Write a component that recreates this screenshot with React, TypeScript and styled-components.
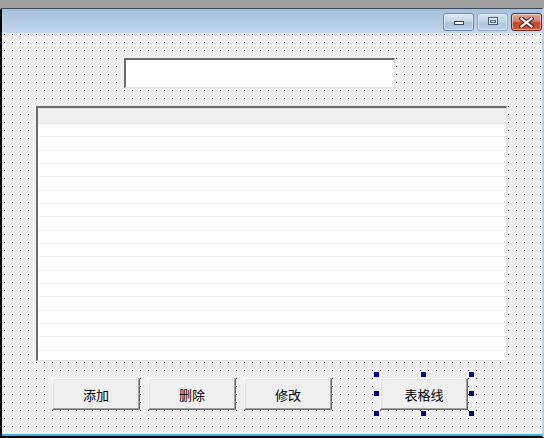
import React from 'react'
import styled, { createGlobalStyle } from 'styled-components'

const GlobalStyle = createGlobalStyle`
  html, body {
    margin: 0;
    padding: 0;
  }
  body {
    width: 544px;
    height: 438px;
    overflow: hidden;
    background: #a0a0a0;
    font-family: "Noto Sans CJK SC", "Liberation Sans", sans-serif;
  }
`

const Desktop = styled.div`
  padding-top: 8px;
  height: 438px;
  box-sizing: border-box;
`

const Window = styled.div`
  height: 430px;
  box-sizing: border-box;
  display: flex;
  flex-direction: column;
  border-top: 1px solid #3c4a5a;
  border-left: 2px solid #000;
  border-right: 2px solid #b9d1ea;
  border-bottom: 2px solid #000;
  border-top-left-radius: 3px;
`

const TitleBar = styled.div`
  height: 24px;
  flex-shrink: 0;
  display: flex;
  justify-content: flex-end;
  align-items: flex-start;
  gap: 3px;
  padding: 4px 0 0 0;
  box-sizing: border-box;
  background: linear-gradient(to bottom, #a7c0dd 0%, #b4cbe4 50%, #c2d7ee 100%);
`

const CaptionButton = styled.div<{ $kind: 'min' | 'max' | 'close' }>`
  width: 31px;
  height: 18px;
  box-sizing: border-box;
  border-radius: 3px;
  display: flex;
  align-items: center;
  justify-content: center;
  border: 1px solid
    ${(p) => (p.$kind === 'close' ? '#6e2a22' : p.$kind === 'max' ? '#8ea7c6' : '#6c87ab')};
  background: ${(p) =>
    p.$kind === 'close'
      ? 'linear-gradient(to bottom, #e5a99d 0%, #d47b6a 45%, #c0462f 55%, #c95a42 100%)'
      : p.$kind === 'max'
      ? 'linear-gradient(to bottom, #d2e0ef 0%, #c0d3e8 45%, #adc5e0 55%, #b9cfe7 100%)'
      : 'linear-gradient(to bottom, #dbe7f4 0%, #c4d6ea 45%, #a9c2df 55%, #b8cee7 100%)'};
  box-shadow: inset 0 0 0 1px rgba(255, 255, 255, 0.45);
`

const Client = styled.div`
  flex: 1;
  display: flex;
  flex-direction: column;
  background-color: #f0f0f0;
  background-image: linear-gradient(to right, transparent 1px, #f0f0f0 1px),
    linear-gradient(to bottom, #000 1px, #f0f0f0 1px);
  background-size: 8px 8px;
  background-position: 2px 1px;
  border-bottom: 2px solid #3fb3e0;
`

const TextBox = styled.div`
  margin: 25px 0 0 122px;
  width: 271px;
  height: 30px;
  box-sizing: border-box;
  background: #fff;
  border-style: solid;
  border-width: 2px 1px 1px 2px;
  border-color: #6b6b6b #e3e3e3 #e3e3e3 #6b6b6b;
`

const ListView = styled.div`
  margin: 18px 0 0 34px;
  width: 471px;
  height: 255px;
  box-sizing: border-box;
  background: #fff;
  border-style: solid;
  border-width: 2px 1px 1px 2px;
  border-color: #6b6b6b #e3e3e3 #e3e3e3 #6b6b6b;
  display: flex;
  flex-direction: column;
  overflow: hidden;
`

const ListHeader = styled.div`
  height: 16px;
  flex-shrink: 0;
  box-sizing: border-box;
  background: #f0f0f0;
  border-top: 1px solid #e4e4e4;
  border-bottom: 1px solid #e8e8e8;
`

const ListRow = styled.div`
  height: 13.33px;
  flex-shrink: 0;
  box-sizing: border-box;
  border-bottom: 1px solid #ededed;
`

const ButtonRow = styled.div`
  margin: 17px 0 0 50px;
  display: flex;
  gap: 8px;
`

const Button = styled.div`
  width: 88px;
  height: 32px;
  box-sizing: border-box;
  display: flex;
  align-items: center;
  justify-content: center;
  background: #efefef;
  border: 1px solid;
  border-color: #ffffff #696969 #696969 #ffffff;
  box-shadow: inset -1px -1px 0 #a0a0a0, inset 1px 1px 0 #e3e3e3;
  font-size: 13px;
  color: #000;
`

const Selected = styled.div`
  position: relative;
  margin-left: 40px;
`

const Handle = styled.span<{ $x: number; $y: number }>`
  position: absolute;
  left: ${(p) => p.$x}px;
  top: ${(p) => p.$y}px;
  width: 5px;
  height: 5px;
  background: #000080;
`

const handles = [
  [-6, -6], [41, -6], [89, -6],
  [-6, 13], [89, 13],
  [-6, 33], [41, 33], [89, 33],
]

const rows = Array.from({ length: 18 })

export default function App() {
  return (
    <Desktop>
      <GlobalStyle />
      <Window>
        <TitleBar>
          <CaptionButton $kind="min">
            <svg width="12" height="18" viewBox="0 0 12 18">
              <rect x="1.5" y="8.5" width="9" height="3" fill="#fff" stroke="#3b4c62" />
            </svg>
          </CaptionButton>
          <CaptionButton $kind="max">
            <svg width="12" height="18" viewBox="0 0 12 18">
              <rect x="1.5" y="4.5" width="9" height="7" fill="#dfe9f5" stroke="#4a5d77" />
              <rect x="3.5" y="7.5" width="5" height="2" fill="#fff" stroke="#4a5d77" />
            </svg>
          </CaptionButton>
          <CaptionButton $kind="close">
            <svg width="15" height="11" viewBox="0 0 15 11">
              <path d="M2.5 1.5 L12.5 9.5 M12.5 1.5 L2.5 9.5" stroke="#4a1d16" strokeWidth="4.2" strokeLinecap="square" />
              <path d="M2.5 1.5 L12.5 9.5 M12.5 1.5 L2.5 9.5" stroke="#fff" strokeWidth="2.2" strokeLinecap="square" />
            </svg>
          </CaptionButton>
        </TitleBar>
        <Client>
          <TextBox />
          <ListView>
            <ListHeader />
            {rows.map((_, i) => (
              <ListRow key={i} />
            ))}
          </ListView>
          <ButtonRow>
            <Button>添加</Button>
            <Button>删除</Button>
            <Button>修改</Button>
            <Selected>
              <Button>表格线</Button>
              {handles.map(([x, y], i) => (
                <Handle key={i} $x={x} $y={y} />
              ))}
            </Selected>
          </ButtonRow>
        </Client>
      </Window>
    </Desktop>
  )
}
